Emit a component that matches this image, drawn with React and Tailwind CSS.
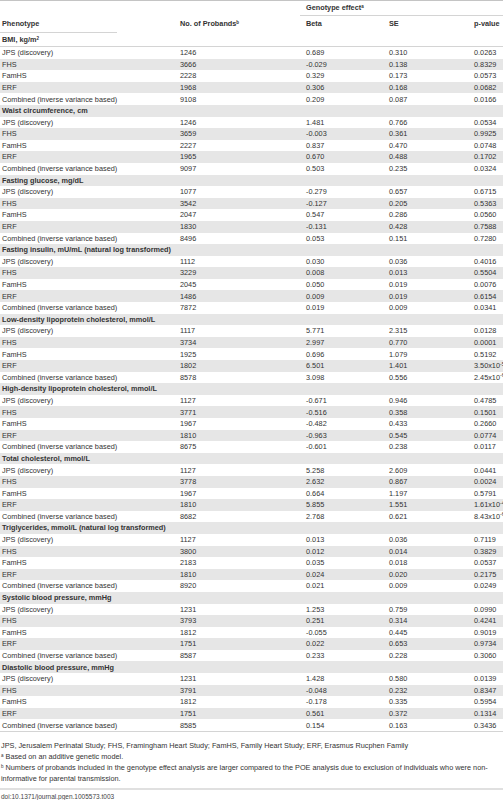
import React from "react";

const sections = [
  ["Waist circumference, cm", [
    ["1246", "1.481", "0.766", "0.0534"],
    ["3659", "-0.003", "0.361", "0.9925"],
    ["2227", "0.837", "0.470", "0.0748"],
    ["1965", "0.670", "0.488", "0.1702"],
    ["9097", "0.503", "0.235", "0.0324"],
  ]],
  ["Fasting glucose, mg/dL", [
    ["1077", "-0.279", "0.657", "0.6715"],
    ["3542", "-0.127", "0.205", "0.5363"],
    ["2047", "0.547", "0.286", "0.0560"],
    ["1830", "-0.131", "0.428", "0.7588"],
    ["8496", "0.053", "0.151", "0.7280"],
  ]],
  ["Fasting insulin, mU/mL (natural log transformed)", [
    ["1112", "0.030", "0.036", "0.4016"],
    ["3229", "0.008", "0.013", "0.5504"],
    ["2045", "0.050", "0.019", "0.0076"],
    ["1486", "0.009", "0.019", "0.6154"],
    ["7872", "0.019", "0.009", "0.0341"],
  ]],
  ["Low-density lipoprotein cholesterol, mmol/L", [
    ["1117", "5.771", "2.315", "0.0128"],
    ["3734", "2.997", "0.770", "0.0001"],
    ["1925", "0.696", "1.079", "0.5192"],
    ["1802", "6.501", "1.401", ["3.50x10", "-5"]],
    ["8578", "3.098", "0.556", ["2.45x10", "-6"]],
  ]],
  ["High-density lipoprotein cholesterol, mmol/L", [
    ["1127", "-0.671", "0.946", "0.4785"],
    ["3771", "-0.516", "0.358", "0.1501"],
    ["1967", "-0.482", "0.433", "0.2660"],
    ["1810", "-0.963", "0.545", "0.0774"],
    ["8675", "-0.601", "0.238", "0.0117"],
  ]],
  ["Total cholesterol, mmol/L", [
    ["1127", "5.258", "2.609", "0.0441"],
    ["3778", "2.632", "0.867", "0.0024"],
    ["1967", "0.664", "1.197", "0.5791"],
    ["1810", "5.855", "1.551", ["1.61x10", "-4"]],
    ["8682", "2.768", "0.621", ["8.43x10", "-6"]],
  ]],
  ["Triglycerides, mmol/L (natural log transformed)", [
    ["1127", "0.013", "0.036", "0.7119"],
    ["3800", "0.012", "0.014", "0.3829"],
    ["2183", "0.035", "0.018", "0.0537"],
    ["1810", "0.024", "0.020", "0.2175"],
    ["8920", "0.021", "0.009", "0.0249"],
  ]],
  ["Systolic blood pressure, mmHg", [
    ["1231", "1.253", "0.759", "0.0990"],
    ["3793", "0.251", "0.314", "0.4241"],
    ["1812", "-0.055", "0.445", "0.9019"],
    ["1751", "0.022", "0.653", "0.9734"],
    ["8587", "0.233", "0.228", "0.3060"],
  ]],
  ["Diastolic blood pressure, mmHg", [
    ["1231", "1.428", "0.580", "0.0139"],
    ["3791", "-0.048", "0.232", "0.8347"],
    ["1812", "-0.178", "0.335", "0.5954"],
    ["1751", "0.561", "0.372", "0.1314"],
    ["8585", "0.154", "0.163", "0.3436"],
  ]],
];

const bmi = [
  ["1246", "0.689", "0.310", "0.0263"],
  ["3666", "-0.029", "0.138", "0.8329"],
  ["2228", "0.329", "0.173", "0.0573"],
  ["1968", "0.306", "0.168", "0.0682"],
  ["9108", "0.209", "0.087", "0.0166"],
];

const labels = ["JPS (discovery)", "FHS", "FamHS", "ERF", "Combined (inverse variance based)"];

function PVal({ v }) {
  if (Array.isArray(v)) {
    return (
      <span>
        {v[0]}
        <sup className="text-[5px]">{v[1]}</sup>
      </span>
    );
  }
  return <span>{v}</span>;
}

function DataRow({ label, data, gray }) {
  return (
    <div className={gray ? "flex h-[11.6px] items-center bg-[#e6e6e6]" : "flex h-[11.6px] items-center"}>
      <div className="w-[180px] shrink-0 pl-[2px] whitespace-nowrap">{label}</div>
      <div className="w-[126px] shrink-0">{data[0]}</div>
      <div className="w-[83px] shrink-0">{data[1]}</div>
      <div className="w-[85px] shrink-0">{data[2]}</div>
      <div className="flex-1 whitespace-nowrap">
        <PVal v={data[3]} />
      </div>
    </div>
  );
}

function Block({ rows }) {
  return rows.map((d, i) => (
    <DataRow key={i} label={labels[i]} data={d} gray={i % 2 === 1} />
  ));
}

export default function App() {
  return (
    <div className="w-[503px] h-[800px] bg-white text-[#333] text-[7.3px] leading-none overflow-hidden" style={{ fontFamily: '"Liberation Sans", Arial, sans-serif' }}>
      <div className="border-t border-[#c4c4c4]">
        <div className="flex h-[15px]">
          <div className="w-[300px] shrink-0" />
          <div className="flex-1 flex items-center border-b border-[#d4d4d4] pl-[6px] font-bold">
            <span>
              Genotype effect<sup className="text-[4.5px]">a</sup>
            </span>
          </div>
        </div>
        <div className="flex h-[16px] items-center font-bold">
          <div className="w-[180px] shrink-0 pl-[2px]">Phenotype</div>
          <div className="w-[126px] shrink-0">
            No. of Probands<sup className="text-[4.5px]">b</sup>
          </div>
          <div className="w-[83px] shrink-0">Beta</div>
          <div className="w-[85px] shrink-0">SE</div>
          <div className="flex-1">p-value</div>
        </div>
        <div className="w-[117px] border-t border-[#d4d4d4]" />
        <div className="flex h-[14px] items-center font-bold pl-[2px] border-b border-[#d4d4d4]">
          <span>
            BMI, kg/m<sup className="text-[4.5px]">2</sup>
          </span>
        </div>
        <Block rows={bmi} />
        {sections.map(([title, rows]) => (
          <React.Fragment key={title}>
            <div className="flex h-[11.6px] items-center bg-[#e6e6e6] font-bold pl-[2px]">{title}</div>
            <Block rows={rows} />
          </React.Fragment>
        ))}
      </div>
      <div className="border-t border-[#d4d4d4] pt-[8px] pb-[4px] pl-[1px] leading-[11px] whitespace-nowrap">
        <div>JPS, Jerusalem Perinatal Study; FHS, Framingham Heart Study; FamHS, Family Heart Study; ERF, Erasmus Rucphen Family</div>
        <div>
          <sup className="text-[4.5px]">a</sup> Based on an additive genetic model.
        </div>
        <div>
          <sup className="text-[4.5px]">b</sup> Numbers of probands included in the genotype effect analysis are larger compared to the POE analysis due to exclusion of individuals who were non-
        </div>
        <div>informative for parental transmission.</div>
      </div>
      <div className="border-t-2 border-[#e0e0e0] pt-[4px] pl-[1px] text-[6.5px] text-[#444]">doi:10.1371/journal.pgen.1005573.t003</div>
    </div>
  );
}
